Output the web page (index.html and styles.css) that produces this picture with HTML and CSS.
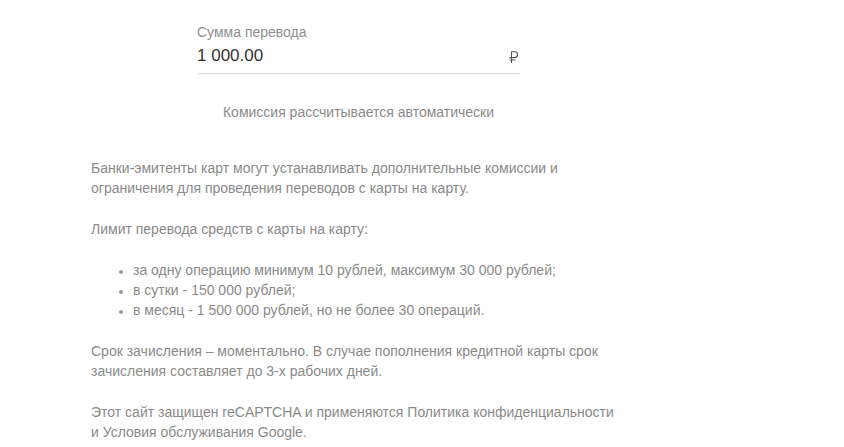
FILE: index.html
```html
<!DOCTYPE html>
<html lang="ru">
<head>
<meta charset="utf-8">
<title>Перевод</title>
<link rel="stylesheet" href="styles.css">
</head>
<body>
<div class="page">
  <div class="field">
    <div class="field-label">Сумма перевода</div>
    <div class="field-row">
      <span class="field-value">1 000.00</span>
      <svg class="ruble" width="9" height="12" viewBox="0 0 9 12" aria-label="₽">
        <path d="M2.5 0.5 V12 M2.5 0.8 H5.6 A2.9 2.9 0 0 1 5.6 6.6 H0.5 M0.5 9 H6.5" fill="none" stroke="#555" stroke-width="1.1"/>
      </svg>
    </div>
  </div>
  <p class="commission">Комиссия рассчитывается автоматически</p>
  <div class="info">
    <p>Банки-эмитенты карт могут устанавливать дополнительные комиссии и ограничения для проведения переводов с карты на карту.</p>
    <p>Лимит перевода средств с карты на карту:</p>
    <ul>
      <li>за одну операцию минимум 10 рублей, максимум 30 000 рублей;</li>
      <li>в сутки - 150 000 рублей;</li>
      <li>в месяц - 1 500 000 рублей, но не более 30 операций.</li>
    </ul>
    <p>Срок зачисления – моментально. В случае пополнения кредитной карты срок зачисления составляет до 3-х рабочих дней.</p>
    <p>Этот сайт защищен reCAPTCHA и применяются Политика конфиденциальности и Условия обслуживания Google.</p>
  </div>
</div>
</body>
</html>
```
FILE: styles.css
```css
html, body {
  margin: 0;
  padding: 0;
  background: #fff;
}
body {
  font-family: "Liberation Sans", Arial, sans-serif;
  font-size: 14px;
  line-height: 20px;
  color: #8a8a8a;
}
.page {
  width: 535px;
  margin-left: 91px;
  padding-top: 22px;
}
.field {
  width: 323px;
  margin: 0 auto;
}
.field-label {
  color: #8f8f8f;
  line-height: 20px;
}
.field-row {
  margin-top: 2px;
  display: flex;
  justify-content: space-between;
  align-items: center;
  padding: 0 2px 5px 0;
  border-bottom: 1px solid #dcdcdc;
}
.field-value {
  font-size: 17px;
  line-height: 24px;
  color: #333;
}
.ruble {
  display: block;
  margin-top: 1px;
}
.commission {
  margin: 28px 0 0;
  text-align: center;
  color: #8a8a8a;
}
.info {
  margin-top: 36px;
  padding-right: 8px;
}
.info p {
  margin: 0 0 21px;
}
.info ul {
  margin: 0 0 21px;
  padding-left: 42px;
}
.info li::marker {
  font-size: 12px;
  color: #999;
}
```
